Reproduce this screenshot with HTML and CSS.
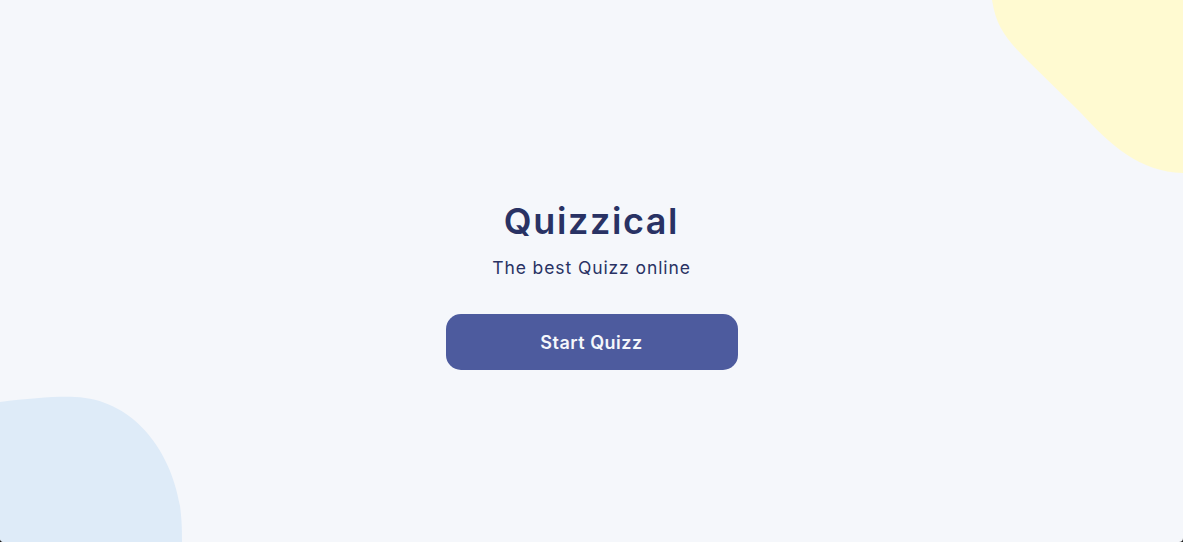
FILE: index.html
```html
<!DOCTYPE html>
<html lang="en">
<head>
<meta charset="utf-8">
<title>Quizzical</title>
<link rel="stylesheet" href="styles.css">
</head>
<body>
<main class="app">
  <svg class="blob blob-yellow" width="193" height="173" viewBox="0 0 193 173" aria-hidden="true">
    <path d="M2 0 C 6 25, 15 38, 35 58 L 90 112 C 120 145, 150 172, 193 173 L193 0 Z" fill="#FFFAD1"/>
  </svg>
  <svg class="blob blob-blue" width="183" height="146" viewBox="0 0 183 146" aria-hidden="true">
    <path d="M0 6 C 30 2, 60 0, 75 1 C 130 3, 170 50, 180 110 C 182 125, 182 135, 182 146 L0 146 Z" fill="#DEEBF8"/>
  </svg>
  <section class="intro">
    <h1 class="title">Quizzical</h1>
    <p class="subtitle">The best Quizz online</p>
    <button class="start-btn" type="button">Start Quizz</button>
  </section>
</main>
</body>
</html>
```

FILE: styles.css
```css
html {
  background: #1c1c1c;
}
body {
  margin: 0;
  font-family: Inter, "Noto Sans", sans-serif;
}
.app {
  position: relative;
  height: 100vh;
  overflow: hidden;
  background: #F5F7FB;
  border-radius: 0 0 4px 4px;
  display: flex;
  align-items: center;
  justify-content: center;
  padding-top: 27px;
  box-sizing: border-box;
}
.blob {
  position: absolute;
  display: block;
}
.blob-yellow {
  top: 0;
  right: 0;
}
.blob-blue {
  left: 0;
  bottom: 0;
}
.intro {
  position: relative;
  display: flex;
  flex-direction: column;
  align-items: center;
}
.title {
  margin: 0;
  font-size: 36px;
  line-height: 44px;
  font-weight: 600;
  color: #293264;
  letter-spacing: 1.6px;
}
.subtitle {
  margin: 15px 0 0;
  font-size: 17.5px;
  line-height: 20px;
  font-weight: 400;
  color: #293264;
  letter-spacing: 0.9px;
}
.start-btn {
  margin-top: 36px;
  width: 292px;
  height: 56px;
  border: none;
  border-radius: 15px;
  background: #4D5B9E;
  color: #F5F7FB;
  font-family: Inter, "Noto Sans", sans-serif;
  font-size: 18px;
  font-weight: 600;
  letter-spacing: 0.5px;
  cursor: pointer;
}
```
